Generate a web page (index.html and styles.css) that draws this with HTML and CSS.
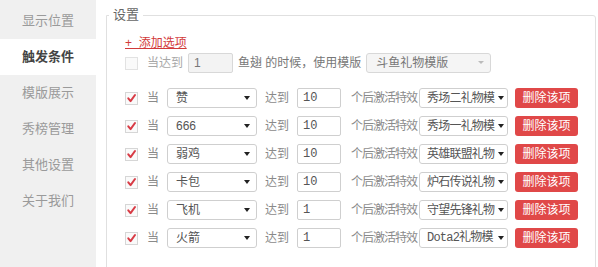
FILE: index.html
```html
<!DOCTYPE html>
<html lang="zh-CN">
<head>
<meta charset="utf-8">
<title>触发条件</title>
<link rel="stylesheet" href="styles.css">
</head>
<body>
<div class="app">
  <nav class="side">
    <div class="tab">显示位置</div>
    <div class="tab active">触发条件</div>
    <div class="tab">模版展示</div>
    <div class="tab">秀榜管理</div>
    <div class="tab">其他设置</div>
    <div class="tab">关于我们</div>
  </nav>
  <main class="main">
    <fieldset class="box">
      <legend class="legend">设置</legend>
      <div class="body">
        <a class="add" href="#">+&nbsp; 添加选项</a>
        <div class="row top-row">
          <span class="cb off"></span>
          <span class="lbl dim m9">当达到</span>
          <span class="inp dis m5">1</span>
          <span class="lbl mid m5">鱼翅 的时候，使用模版</span>
          <span class="sel dis wide m5"><span class="sel-text">斗鱼礼物模版</span><span class="caret light"></span></span>
        </div>
        <div class="rules">
          <div class="row">
            <span class="cb on"><svg viewBox="0 0 12 12" class="tick"><path d="M2.5 5.8 L5 8.8 L9.8 2.2" /></svg></span>
            <span class="lbl m9">当</span>
            <span class="sel gift m8"><span class="sel-text">赞</span><span class="caret"></span></span>
            <span class="lbl m8">达到</span>
            <span class="inp num m8">10</span>
            <span class="lbl tight m10">个后激活特效</span>
            <span class="sel fx m2"><span class="sel-text fit">秀场二礼物模</span><span class="caret"></span></span>
            <button class="del m7">删除该项</button>
          </div>
          <div class="row">
            <span class="cb on"><svg viewBox="0 0 12 12" class="tick"><path d="M2.5 5.8 L5 8.8 L9.8 2.2" /></svg></span>
            <span class="lbl m9">当</span>
            <span class="sel gift m8"><span class="sel-text">666</span><span class="caret"></span></span>
            <span class="lbl m8">达到</span>
            <span class="inp num m8">10</span>
            <span class="lbl tight m10">个后激活特效</span>
            <span class="sel fx m2"><span class="sel-text fit">秀场一礼物模</span><span class="caret"></span></span>
            <button class="del m7">删除该项</button>
          </div>
          <div class="row">
            <span class="cb on"><svg viewBox="0 0 12 12" class="tick"><path d="M2.5 5.8 L5 8.8 L9.8 2.2" /></svg></span>
            <span class="lbl m9">当</span>
            <span class="sel gift m8"><span class="sel-text">弱鸡</span><span class="caret"></span></span>
            <span class="lbl m8">达到</span>
            <span class="inp num m8">10</span>
            <span class="lbl tight m10">个后激活特效</span>
            <span class="sel fx m2"><span class="sel-text fit">英雄联盟礼物</span><span class="caret"></span></span>
            <button class="del m7">删除该项</button>
          </div>
          <div class="row">
            <span class="cb on"><svg viewBox="0 0 12 12" class="tick"><path d="M2.5 5.8 L5 8.8 L9.8 2.2" /></svg></span>
            <span class="lbl m9">当</span>
            <span class="sel gift m8"><span class="sel-text">卡包</span><span class="caret"></span></span>
            <span class="lbl m8">达到</span>
            <span class="inp num m8">10</span>
            <span class="lbl tight m10">个后激活特效</span>
            <span class="sel fx m2"><span class="sel-text fit">炉石传说礼物</span><span class="caret"></span></span>
            <button class="del m7">删除该项</button>
          </div>
          <div class="row">
            <span class="cb on"><svg viewBox="0 0 12 12" class="tick"><path d="M2.5 5.8 L5 8.8 L9.8 2.2" /></svg></span>
            <span class="lbl m9">当</span>
            <span class="sel gift m8"><span class="sel-text">飞机</span><span class="caret"></span></span>
            <span class="lbl m8">达到</span>
            <span class="inp num m8">1</span>
            <span class="lbl tight m10">个后激活特效</span>
            <span class="sel fx m2"><span class="sel-text fit">守望先锋礼物</span><span class="caret"></span></span>
            <button class="del m7">删除该项</button>
          </div>
          <div class="row">
            <span class="cb on"><svg viewBox="0 0 12 12" class="tick"><path d="M2.5 5.8 L5 8.8 L9.8 2.2" /></svg></span>
            <span class="lbl m9">当</span>
            <span class="sel gift m8"><span class="sel-text">火箭</span><span class="caret"></span></span>
            <span class="lbl m8">达到</span>
            <span class="inp num m8">1</span>
            <span class="lbl tight m10">个后激活特效</span>
            <span class="sel fx m2"><span class="sel-text fit mono">Dota2礼物模</span><span class="caret"></span></span>
            <button class="del m7">删除该项</button>
          </div>
        </div>
      </div>
    </fieldset>
  </main>
</div>
</body>
</html>
```

FILE: styles.css
```css
html, body {
  margin: 0;
  padding: 0;
  height: 267px;
  overflow: hidden;
  background: #fff;
}
body {
  font-family: "Liberation Sans", "Noto Sans CJK SC", sans-serif;
  font-size: 12px;
  color: #555;
}
.app {
  display: flex;
  height: 267px;
}
.side {
  width: 96px;
  flex: none;
  background: #f0f0f0;
  padding-top: 3px;
  box-sizing: border-box;
}
.tab {
  height: 36px;
  line-height: 36px;
  padding-left: 22px;
  font-size: 13px;
  color: #9a9a9a;
}
.tab.active {
  background: #fff;
  color: #444;
  font-weight: 600;
}
.main {
  flex: 1;
  padding: 6px 2px 0 10px;
}
.box {
  margin: 0;
  border: 1px solid #e0e0e0;
  border-radius: 0 3px 0 0;
  padding: 0 0 0 2px;
  min-height: 320px;
  box-sizing: border-box;
}
.legend {
  padding: 0 4px;
  font-size: 13px;
  line-height: 18px;
  color: #666;
}
.body {
  padding-left: 16px;
}
.add {
  display: block;
  margin-top: 11px;
  line-height: 16px;
  color: #d23a3a;
  text-decoration: underline;
  width: max-content;
}
.row {
  display: flex;
  align-items: center;
  height: 20px;
}
.top-row {
  margin-top: 2px;
}
.rules {
  margin-top: 15px;
  display: flex;
  flex-direction: column;
  gap: 8px;
}
.m2 { margin-left: 2px; }
.m5 { margin-left: 5px; }
.m7 { margin-left: 7px; }
.m8 { margin-left: 8px; }
.m9 { margin-left: 9px; }
.m10 { margin-left: 10px; }
.cb {
  width: 11px;
  height: 11px;
  border: 1px solid #d6d6d6;
  background: #fafafa;
  flex: none;
  display: flex;
}
.cb.off {
  border-color: #e2e2e2;
}
.tick {
  width: 11px;
  height: 11px;
}
.tick path {
  fill: none;
  stroke: #d83b45;
  stroke-width: 2.2;
  stroke-linecap: round;
  stroke-linejoin: round;
}
.lbl {
  color: #8a8a8a;
  white-space: nowrap;
  line-height: 20px;
}
.lbl.tight {
  letter-spacing: -1px;
}
.lbl.dim { color: #a8a8a8; }
.lbl.mid { color: #777; }
.inp {
  height: 20px;
  box-sizing: border-box;
  border: 1px solid #cfcfcf;
  border-radius: 2px;
  background: #fff;
  padding-left: 5px;
  line-height: 18px;
  color: #555;
  flex: none;
  width: 44px;
}
.inp.dis {
  width: 45px;
  background: #f3f3f3;
  border-color: #d8d8d8;
  color: #777;
}
.num {
  font-family: "Liberation Mono", monospace;
}
.sel {
  position: relative;
  height: 20px;
  box-sizing: border-box;
  border: 1px solid #cfcfcf;
  border-radius: 3px;
  background: #fff;
  display: flex;
  align-items: center;
  padding-left: 8px;
  flex: none;
}
.sel.gift { width: 90px; }
.sel.fx {
  width: 89px;
  padding-left: 7px;
}
.sel.fx .caret { right: 3px; }
.sel.wide {
  width: 125px;
  background: #f5f5f5;
  border-color: #d8d8d8;
  padding-left: 9px;
}
.sel-text {
  line-height: 18px;
  color: #555;
  white-space: nowrap;
}
.sel.wide .sel-text { color: #777; }
.sel-text.fit {
  letter-spacing: -0.8px;
}
.mono {
  font-family: "Liberation Mono", "Noto Sans CJK SC", monospace;
}
.caret {
  position: absolute;
  right: 6px;
  top: 7px;
  width: 0;
  height: 0;
  border-left: 3.5px solid transparent;
  border-right: 3.5px solid transparent;
  border-top: 4px solid #222;
}
.caret.light {
  border-top-color: #bbb;
  border-left-width: 3px;
  border-right-width: 3px;
  border-top-width: 3px;
}
.del {
  height: 20px;
  width: 63px;
  border: none;
  border-radius: 3px;
  background: #e04848;
  color: #fff;
  font-family: "Liberation Sans", "Noto Sans CJK SC", sans-serif;
  font-size: 12px;
  padding: 0;
  line-height: 20px;
  flex: none;
}
```
